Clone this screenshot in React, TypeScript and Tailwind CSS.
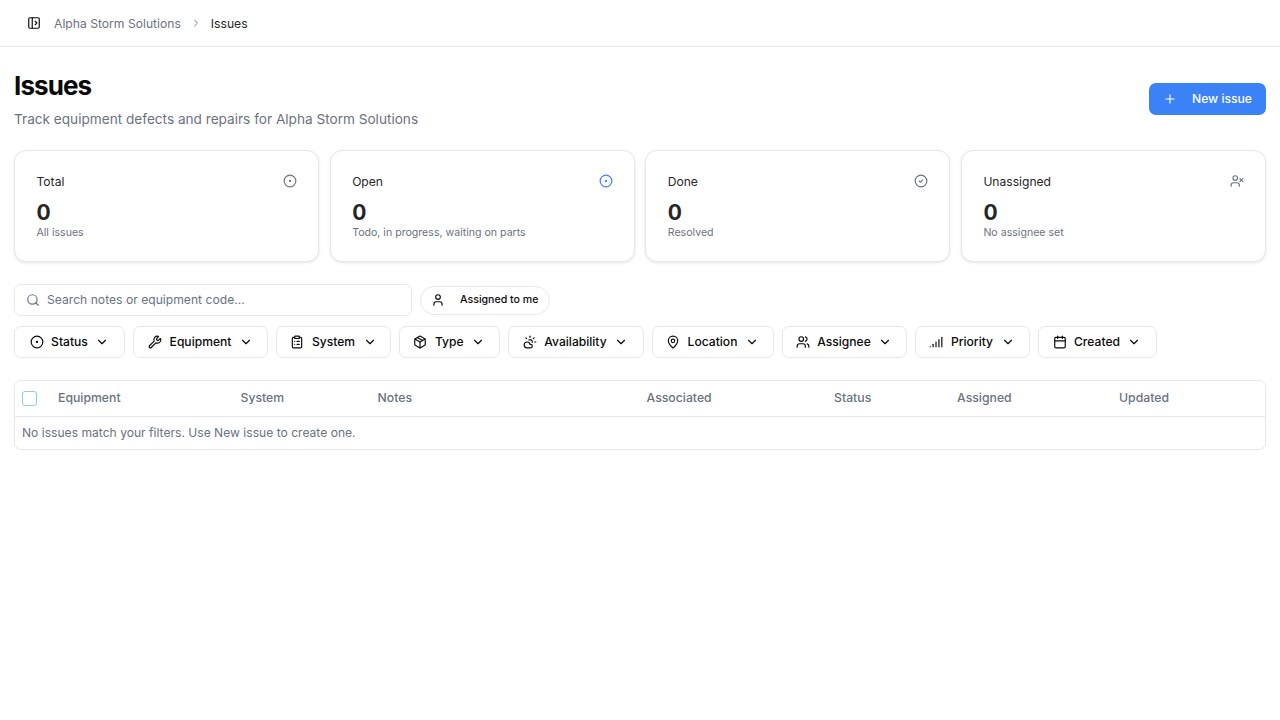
import {
  Calendar,
  ChevronDown,
  ChevronRight,
  CircleCheck,
  CircleDot,
  ClipboardList,
  CloudSun,
  MapPin,
  Package,
  PanelLeftOpen,
  Plus,
  Search,
  Signal,
  User,
  UserX,
  Users,
  Wrench,
} from "lucide-react";

const stats = [
  { title: "Total", note: "All issues", icon: CircleDot, tone: "text-[#6b7280]" },
  { title: "Open", note: "Todo, in progress, waiting on parts", icon: CircleDot, tone: "text-[#3b82f6]" },
  { title: "Done", note: "Resolved", icon: CircleCheck, tone: "text-[#6b7280]" },
  { title: "Unassigned", note: "No assignee set", icon: UserX, tone: "text-[#6b7280]" },
];

const filters = [
  { label: "Status", icon: CircleDot, width: "w-[111px]" },
  { label: "Equipment", icon: Wrench, width: "w-[135px]" },
  { label: "System", icon: ClipboardList, width: "w-[115px]" },
  { label: "Type", icon: Package, width: "w-[100.5px]" },
  { label: "Availability", icon: CloudSun, width: "w-[136px]" },
  { label: "Location", icon: MapPin, width: "w-[122px]" },
  { label: "Assignee", icon: Users, width: "w-[125px]" },
  { label: "Priority", icon: Signal, width: "w-[115px]" },
  { label: "Created", icon: Calendar, width: "w-[119px]" },
];

const columns = [
  { label: "Equipment", width: "w-[182.5px]" },
  { label: "System", width: "w-[137px]" },
  { label: "Notes", width: "w-[269px]" },
  { label: "Associated", width: "w-[187.5px]" },
  { label: "Status", width: "w-[123px]" },
  { label: "Assigned", width: "w-[162px]" },
  { label: "Updated", width: "w-[100px]" },
];

export default function App() {
  return (
    <div className="min-h-[720px] bg-white font-['Inter',sans-serif] text-[#0a0a0a]">
      {/* Top bar */}
      <header className="flex h-[47px] items-center border-b border-[#e5e7eb] pl-[27px]">
        <PanelLeftOpen className="h-[14px] w-[14px] text-[#0a0a0a]" strokeWidth={2} />
        <span className="mt-[2px] ml-[13px] text-[12.15px] text-[#6b7280]">Alpha Storm Solutions</span>
        <ChevronRight className="ml-[9.5px] h-[12px] w-[12px] text-[#6b7280]" strokeWidth={1.75} />
        <span className="mt-[2px] ml-[8.5px] text-[12.15px] text-[#262626]">Issues</span>
      </header>

      <main className="px-[14px]">
        {/* Page heading */}
        <div className="flex items-start justify-between pt-[21px]">
          <div>
            <h1 className="text-[26px] leading-[35px] font-bold tracking-[-0.9px] text-[#0a0a0a]">Issues</h1>
            <p className="mt-[6px] text-[13.62px] leading-[20px] text-[#6b7280]">
              Track equipment defects and repairs for Alpha Storm Solutions
            </p>
          </div>
          <button className="mt-[15px] flex h-[32px] w-[117px] items-center rounded-[7px] bg-[#3b82f6] pl-[14px] text-[12.15px] font-[450] text-white">
            <Plus className="h-[14px] w-[14px]" strokeWidth={2} />
            <span className="ml-[15px]">New issue</span>
          </button>
        </div>

        {/* Stat cards */}
        <div className="mt-[21px] grid grid-cols-4 gap-[10.5px]">
          {stats.map((s) => (
            <div
              key={s.title}
              className="h-[112px] rounded-[12px] border border-[#e5e7eb] bg-white pr-[21px] pl-[21.5px] pt-[22px] shadow-[0_1px_3px_rgba(0,0,0,0.1)]"
            >
              <div className="flex items-center justify-between">
                <span className="text-[12.1px] leading-[18px] text-[#262626]">{s.title}</span>
                <s.icon className={`mb-[2px] h-[14px] w-[14px] ${s.tone}`} strokeWidth={2} />
              </div>
              <div className="mt-[8px] text-[21px] leading-[28px] font-bold text-[#262626]">0</div>
              <div className="-mt-[1px] text-[10.6px] leading-[14px] text-[#6b7280]">{s.note}</div>
            </div>
          ))}
        </div>

        {/* Search */}
        <div className="mt-[22px] flex items-center gap-[8px]">
          <div className="flex h-[32px] w-[398px] items-center rounded-[7px] border border-[#e5e7eb] pl-[11px]">
            <Search className="h-[14px] w-[14px] text-[#6b7280]" strokeWidth={2} />
            <span className="ml-[7px] text-[12.15px] text-[#6b7280]">Search notes or equipment code...</span>
          </div>
          <button className="flex h-[29px] items-center rounded-full border border-[#e5e7eb] pl-[10px] pr-[11px] text-[10.6px] font-[450] text-[#0a0a0a]">
            <User className="h-[14px] w-[14px]" strokeWidth={2} />
            <span className="ml-[15px]">Assigned to me</span>
          </button>
        </div>

        {/* Filters */}
        <div className="mt-[10px] flex gap-[8px]">
          {filters.map((f) => (
            <button
              key={f.label}
              className={`${f.width} flex h-[32px] items-center justify-center rounded-[7px] border border-[#e5e7eb] bg-white text-[12.1px] font-[450] text-[#0a0a0a]`}
            >
              <f.icon className="h-[14px] w-[14px]" strokeWidth={2} />
              <span className="ml-[7.5px]">{f.label}</span>
              <ChevronDown className="ml-[7.5px] h-[14px] w-[14px]" strokeWidth={2} />
            </button>
          ))}
        </div>

        {/* Table */}
        <div className="mt-[22px] overflow-hidden rounded-[7px] border border-[#e5e7eb]">
          <div className="flex h-[36px] items-center border-b border-[#e5e7eb] pl-[7px]">
            <span className="mr-[21px] h-[15px] w-[15px] rounded-[3px] border border-[#93c5fd] bg-white" />
            {columns.map((c) => (
              <span key={c.label} className={`${c.width} text-[12.25px] font-[450] text-[#6b7280]`}>
                {c.label}
              </span>
            ))}
          </div>
          <div className="flex h-[32px] items-center pl-[7px] text-[12.1px] text-[#6b7280]">
            No issues match your filters. Use New issue to create one.
          </div>
        </div>
      </main>
    </div>
  );
}
